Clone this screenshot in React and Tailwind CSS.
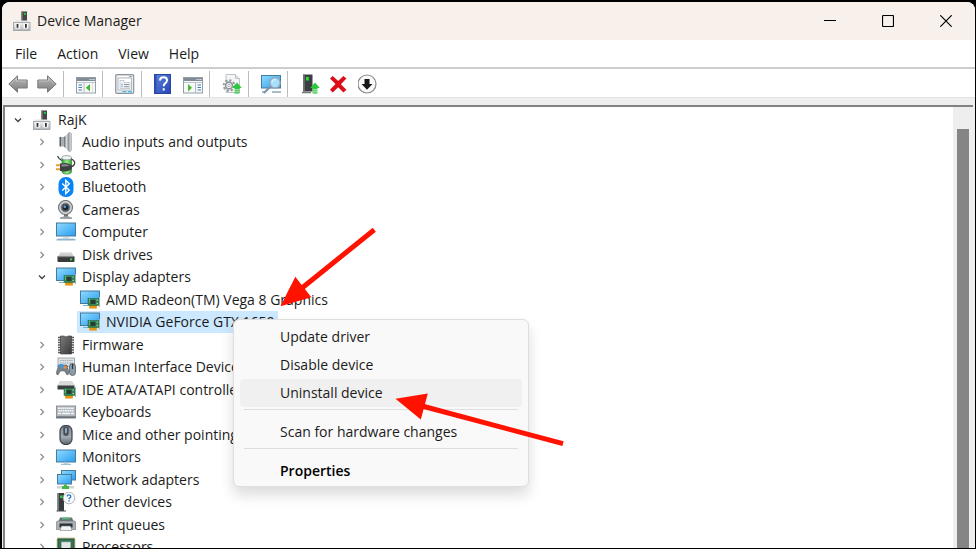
import React, { useState } from "react";

function Svg({ children, className = "size-5" }) {
  return (
    <svg viewBox="0 0 20 20" className={className + " shrink-0"} aria-hidden="true">
      {children}
    </svg>
  );
}

// gradients shared by all of the device icons
function Gradients() {
  return (
    <svg className="absolute size-0" aria-hidden="true">
      <defs>
        <linearGradient id="screen" x1="0" y1="0" x2="1" y2="1">
          <stop offset="0" stopColor="#8fdcff" />
          <stop offset="1" stopColor="#2b9cf0" />
        </linearGradient>
        <linearGradient id="metal" x1="0" y1="0" x2="0" y2="1">
          <stop offset="0" stopColor="#f1f2f3" />
          <stop offset="1" stopColor="#b4b7ba" />
        </linearGradient>
        <linearGradient id="metalSide" x1="0" y1="0" x2="1" y2="0">
          <stop offset="0" stopColor="#62676c" />
          <stop offset="0.5" stopColor="#d6dade" />
          <stop offset="1" stopColor="#83888d" />
        </linearGradient>
        <linearGradient id="mouseBody" x1="0" y1="0" x2="0" y2="1">
          <stop offset="0" stopColor="#7d868f" />
          <stop offset="0.6" stopColor="#a3abb3" />
          <stop offset="1" stopColor="#5b636b" />
        </linearGradient>
        <linearGradient id="arrowGray" x1="0" y1="0" x2="0" y2="1">
          <stop offset="0" stopColor="#b9b9b9" />
          <stop offset="1" stopColor="#7c7c7c" />
        </linearGradient>
        <linearGradient id="dark" x1="0" y1="0" x2="1" y2="1">
          <stop offset="0" stopColor="#7b7b7b" />
          <stop offset="1" stopColor="#3a3a3a" />
        </linearGradient>
        <linearGradient id="helpBlue" x1="0" y1="0" x2="1" y2="1">
          <stop offset="0" stopColor="#5f86dd" />
          <stop offset="1" stopColor="#2444b4" />
        </linearGradient>
        <linearGradient id="green" x1="0" y1="0" x2="1" y2="0">
          <stop offset="0" stopColor="#2fa32f" />
          <stop offset="0.5" stopColor="#9bee8e" />
          <stop offset="1" stopColor="#34a834" />
        </linearGradient>
      </defs>
    </svg>
  );
}

function ComputerRootIcon() {
  return (
    <Svg>
      <path d="M9.500 0.500H15v10H9.500z" fill="#454545" />
      <path d="M9.500 0.500h1.500v10H9.500z" fill="#6a6a6a" />
      <rect x="12" y="2" width="2" height="2" fill="#19c83c" />
      <path d="M3 9.500h13.500l1.500 2.500H1.500z" fill="#e4e6e8" />
      <rect x="1.500" y="11.500" width="16.500" height="8" fill="url(#metal)" stroke="#9a9da1" strokeWidth="0.800" />
      <rect x="3.500" y="12.500" width="4.500" height="5" fill="#fafafa" />
      <rect x="11.500" y="12.500" width="4.500" height="5" fill="#fafafa" />
      <rect x="4.600" y="13" width="1.800" height="3.800" fill="#333" />
      <rect x="13" y="13" width="1.800" height="3.800" fill="#333" />
    </Svg>
  );
}

function AudioIcon() {
  return (
    <Svg>
      <path d="M3.500 5h1.500v9.500H3.500z" fill="#565b60" />
      <path d="M5 5h3v9.500H5z" fill="#a9afb4" />
      <path d="M8 5 13 0.500v19l-5-5z" fill="url(#metalSide)" />
      <path d="M13 0.300q2.500 0 2.500 2v15.400q0 2-2.500 2z" fill="#c3c8cc" stroke="#959ba0" strokeWidth="0.500" />
    </Svg>
  );
}

function BatteryIcon() {
  return (
    <Svg>
      <path d="M6 3h9.500v13.500q0 2.500-4.700 2.500T6 16.500z" fill="url(#green)" stroke="#2b7e28" strokeWidth="0.700" />
      <ellipse cx="10.700" cy="2.700" rx="4.800" ry="2.100" fill="#f1f4f6" stroke="#8d9398" strokeWidth="0.800" />
      <path d="M1.500 1Q3 4.500 6 5.500M15.500 4q4 2 3 5t-4.500 2.500" fill="none" stroke="#3c3c3c" strokeWidth="1.200" />
      <path d="M0 10.300h5M0 14.300h5" stroke="#e2a42c" strokeWidth="2" />
      <path d="M4 8.500l6-.5q6 1 6 4.200T10 16.500L4 16z" fill="#3e4144" />
      <path d="M5.500 9.500l4.500-.3q3 .5 3.500 1.800l-8 .5z" fill="#8b8f92" />
    </Svg>
  );
}

function BluetoothIcon() {
  return (
    <Svg>
      <rect x="2.500" y="0" width="15" height="20" rx="7" fill="#0a84f5" />
      <path d="M6.300 6.500l7 6.800-3.500 3.400V3.300l3.500 3.400-7 6.800" fill="none" stroke="#fff" strokeWidth="1.400" />
    </Svg>
  );
}

function CameraIcon() {
  return (
    <Svg>
      <path d="M8 14h4v3H8z" fill="#6f7377" />
      <path d="M4 17.500q6-2.500 12 0v1.500H4z" fill="#9fa3a7" />
      <circle cx="9.500" cy="7.500" r="7" fill="#d4d7da" stroke="#73777b" strokeWidth="1.200" />
      <circle cx="9.500" cy="7.500" r="4.500" fill="#4f5458" stroke="#8c9094" strokeWidth="0.800" />
      <circle cx="9.500" cy="7.500" r="2.600" fill="#172636" />
      <circle cx="8.800" cy="6.700" r="1.300" fill="#69a3d2" />
    </Svg>
  );
}

function PcIcon() {
  return (
    <Svg>
      <rect x="0.500" y="1" width="19" height="13" fill="url(#screen)" stroke="#467b9c" />
      <path d="M7 15h6v2H7z" fill="#d5dde2" />
      <path d="M0.500 17h19v1.500H0.500z" fill="#8eb4ca" />
      <path d="M2 16.500h16" stroke="#c8d8e2" strokeWidth="0.800" />
    </Svg>
  );
}

function DiskIcon() {
  return (
    <Svg>
      <path d="M5 7h10l3.500 5h-17z" fill="#c9cbcd" />
      <path d="M5 7h10l1 1.500H4z" fill="#e2e3e4" />
      <rect x="1.500" y="11.500" width="17" height="5.500" rx="0.800" fill="#37393b" />
      <rect x="1.500" y="11" width="17" height="1.200" fill="#85888b" />
      <rect x="14" y="13.500" width="2.200" height="1.800" fill="#3be04c" />
    </Svg>
  );
}

function CardChip() {
  return (
    <>
      <rect x="9" y="14.500" width="8" height="4" fill="#f0a21d" />
      <path d="M11 15v3.500M13 15v3.500M15 15v3.500" stroke="#c97b0c" strokeWidth="0.600" />
      <rect x="8" y="8.500" width="11" height="7" fill="#2f8a55" stroke="#236340" strokeWidth="0.500" />
      <rect x="10.500" y="10" width="5" height="4" fill="#2b3c35" />
      <path d="M9 9.800h1M9 12h1M16.500 10h1.500M16.500 13.500h1.500" stroke="#a6dfae" strokeWidth="0.900" />
      <path d="M19.500 7v10" stroke="#a7acb0" />
    </>
  );
}

function DisplayIcon() {
  return (
    <Svg>
      <rect x="0.500" y="1" width="19" height="12.500" fill="url(#screen)" stroke="#467b9c" />
      <path d="M3 15.500h5" stroke="#7cb2d4" />
      <CardChip />
    </Svg>
  );
}

function FirmwareIcon() {
  return (
    <Svg>
      <path
        d="M2 2.500h16M2 5h16M2 7.500h16M2 10h16M2 12.500h16M2 15h16M2 17.500h16"
        stroke="#55585b"
        strokeWidth="1.300"
      />
      <path d="M4.500 1H8q2 2 4 0h3.500v18h-11z" fill="url(#dark)" stroke="#3a3a3a" strokeWidth="0.600" />
    </Svg>
  );
}

function HidIcon() {
  return (
    <Svg>
      <rect x="2" y="1" width="16.500" height="8.500" fill="#dfe2e5" stroke="#a3a9ae" />
      <path d="M4 3.500h12.500M4 6h12.500" stroke="#a0a8af" strokeDasharray="1.500 0.800" />
      <path d="M2.500 8h8.500l2 7q0 3-2 3L8.500 14h-4L2 18q-2 0-1.500-3z" fill="#7a828b" stroke="#545b62" strokeWidth="0.500" />
      <rect x="3.500" y="7" width="3.500" height="3.500" fill="#2f9df0" />
      <circle cx="9" cy="10.300" r="1.400" fill="#f28b35" />
      <rect x="13.500" y="6.500" width="6" height="12" rx="3" fill="#8e9aa4" stroke="#47515a" strokeWidth="0.700" />
      <path d="M16.500 7v5" stroke="#263543" strokeWidth="1.200" />
    </Svg>
  );
}

function IdeIcon() {
  return (
    <Svg>
      <path d="M4 1h12l3 5H1z" fill="#d8dadb" />
      <rect x="1.500" y="5.500" width="17" height="4" fill="#3c3f42" />
      <CardChip />
    </Svg>
  );
}

function KeyboardIcon() {
  return (
    <Svg>
      <rect x="0.500" y="4" width="19" height="12" fill="#b4bac0" stroke="#8d949a" />
      <path d="M0.500 15.200h19" stroke="#6a7178" strokeWidth="1.800" />
      <path d="M2 6.300h16M2.500 8.800h15" stroke="#f7f9fa" strokeWidth="1.600" strokeDasharray="1.700 0.500" />
      <path d="M2 11.500h3M6 11.500h8M15 11.500h3" stroke="#f7f9fa" strokeWidth="1.600" />
    </Svg>
  );
}

function MouseIcon() {
  return (
    <Svg>
      <rect x="4" y="0.500" width="12" height="19" rx="5.500" fill="url(#mouseBody)" stroke="#3c4249" strokeWidth="1.200" />
      <path d="M7.300 1.500v7.500q0 2 2.700 2t2.700-2V1.500z" fill="#4c545c" />
      <rect x="8.800" y="2.500" width="2.400" height="6" rx="1" fill="#a8c4dc" stroke="#20272d" strokeWidth="0.600" />
    </Svg>
  );
}

function MonitorIcon() {
  return (
    <Svg>
      <rect x="0.500" y="3" width="19" height="12" fill="url(#screen)" stroke="#467b9c" />
      <path d="M8 15.500h4v1.300H8z" fill="#b8cad6" />
      <path d="M5 17.300h10" stroke="#8bb0c6" />
    </Svg>
  );
}

function NetworkIcon() {
  return (
    <Svg>
      <rect x="5.500" y="0.500" width="14" height="9.500" fill="url(#screen)" stroke="#467b9c" />
      <rect x="1.500" y="4.500" width="14" height="9.500" fill="url(#screen)" stroke="#467b9c" />
      <path d="M1 17.300h17" stroke="#d0d4d6" strokeWidth="2.500" />
      <path d="M8 14.500h3v1.500h2v3H6v-3h2z" fill="#43b74b" />
    </Svg>
  );
}

function OtherIcon() {
  return (
    <Svg>
      <path d="M1.500 1H8v18H1.500z" fill="#383b3e" />
      <path d="M1.500 1H3v18H1.500z" fill="#75797c" />
      <rect x="4" y="3.500" width="2.500" height="2.500" fill="#27dd3d" />
      <path d="M0.500 19h9.500" stroke="#4c4f52" />
      <circle cx="13" cy="6" r="5.800" fill="#f8fafb" stroke="#a9b0b6" strokeWidth="0.900" />
      <path d="M11.200 4.500q0-1.600 1.800-1.600t1.800 1.500q0 1-1 1.500-.8.500-.8 1.400M13 8.300v1.200" fill="none" stroke="#2676c5" strokeWidth="1.300" />
    </Svg>
  );
}

function PrinterIcon() {
  return (
    <Svg>
      <path d="M4 2.500h12l1.500 4h-15z" fill="#6b7176" />
      <path d="M6 2.500h8v1.800H6z" fill="#50bd7a" />
      <path d="M1 6h18l1 3v5.500H0V9z" fill="#a9b0b6" stroke="#737a80" strokeWidth="0.600" />
      <path d="M3.500 8.500h13v4h-13z" fill="#2d3135" />
      <path d="M5.500 11h9l1.500 4.500H4z" fill="#f1f3f5" stroke="#7a8085" strokeWidth="0.600" />
    </Svg>
  );
}

function ProcessorIcon() {
  return (
    <Svg>
      <rect x="1.500" y="1.500" width="17" height="17" fill="none" stroke="#b3913e" strokeWidth="2" strokeDasharray="1 1" />
      <rect x="2" y="2" width="16" height="16" fill="#347454" stroke="#24543c" />
      <rect x="5.500" y="5" width="9" height="10" fill="#e3e6e5" stroke="#a9afac" strokeWidth="0.700" />
    </Svg>
  );
}

function BackIcon() {
  return (
    <Svg>
      <path d="M0.800 10 9.500 1.800V6H19.200v8H9.500v4.200z" fill="url(#arrowGray)" stroke="#7a7a7a" strokeLinejoin="round" />
      <path d="M2.600 10 8.500 4.300V7h9.700" fill="none" stroke="#d0d0d0" strokeWidth="0.700" />
    </Svg>
  );
}

function ForwardIcon() {
  return (
    <Svg>
      <path d="M19.200 10 10.500 1.800V6H0.800v8h9.700v4.200z" fill="url(#arrowGray)" stroke="#7a7a7a" strokeLinejoin="round" />
      <path d="M1.800 7h9.700V4.300l5.900 5.700" fill="none" stroke="#d0d0d0" strokeWidth="0.700" />
    </Svg>
  );
}

function TreePaneIcon() {
  return (
    <Svg>
      <rect x="0.500" y="3.500" width="19" height="15.500" fill="#f8f9fa" stroke="#989da3" />
      <rect x="1" y="4" width="18" height="3" fill="#7f8c98" />
      <path d="M13.500 5.500h1M15.500 5.500h1M17.300 5.500h1" stroke="#fff" />
      <path d="M1 8.500h18" stroke="#bfc5cb" />
      <path d="M2.500 11h3.500M2.500 13.500h3.500M2.500 16h3.500" stroke="#3e80b8" strokeWidth="1.200" />
      <path d="M8 9v10" stroke="#b3b9bf" />
      <path d="M14 10v7.500L9.800 13.700z" fill="#47b629" />
      <path d="M16.500 9v10" stroke="#d9dde0" />
    </Svg>
  );
}

function ActionPaneIcon() {
  return (
    <Svg>
      <rect x="0.500" y="3.500" width="19" height="15.500" fill="#f8f9fa" stroke="#989da3" />
      <rect x="1" y="4" width="18" height="3" fill="#7f8c98" />
      <path d="M13.500 5.500h1M15.500 5.500h1M17.300 5.500h1" stroke="#fff" />
      <path d="M1 8.500h18" stroke="#bfc5cb" />
      <path d="M5 10v7.500l4-3.800z" fill="#47b629" />
      <path d="M12.500 9v10" stroke="#b3b9bf" />
      <path d="M14.500 11H18M14.500 13.500H18M14.500 16H18" stroke="#3e80b8" strokeWidth="1.200" />
    </Svg>
  );
}

function PropertiesIcon() {
  return (
    <Svg>
      <rect x="0.700" y="0.700" width="18" height="18.600" rx="1" fill="#e9ebed" stroke="#8f959a" strokeWidth="1.200" />
      <rect x="3" y="4" width="13.500" height="12" fill="#fff" stroke="#a7adb3" strokeWidth="0.800" />
      <path d="M3 2.500h10" stroke="#fff" />
      <path d="M14.500 2.500h2" stroke="#7f858a" />
      <path d="M5 6.500h4v2h6v6H5z" fill="#f3f6f8" stroke="#b4bac0" strokeWidth="0.700" />
      <path d="M6.500 10.500h1M6.500 12.700h1" stroke="#2f96d6" strokeWidth="1.300" />
      <path d="M9 10.500h5M9 12.700h5" stroke="#8b9197" />
      <path d="M7.500 17.600h4M13 17.600h4" stroke="#38bce8" strokeWidth="1.400" />
    </Svg>
  );
}

function HelpIcon() {
  return (
    <Svg>
      <rect x="0.500" y="0.500" width="16" height="19" fill="url(#helpBlue)" stroke="#2743a0" />
      <path d="M0.500 0.500h2v19h-2z" fill="#2c4fb5" />
      <path
        d="M6 6.500q0-3.300 3.500-3.300T13 6.300q0 1.800-1.800 3-1.500 1-1.500 3M9.700 14.300v2.300"
        fill="none"
        stroke="#fff"
        strokeWidth="2"
      />
    </Svg>
  );
}

function UpArrow() {
  return <path d="M15 8.500l4.800 5.500h-2.300v1.500h-5V14h-2.300zM12.500 16.300h5v1.200h-5zM12.500 18.300h5v1.200h-5z" fill="#2ac83a" />;
}

function UpdateIcon() {
  return (
    <Svg>
      <path d="M4 0.500h9.500l4 4v14H4z" fill="#f4f5f6" stroke="#c0c4c7" />
      <path d="M13.500 0.500v4h4" fill="#e0e3e5" stroke="#c0c4c7" />
      <circle cx="7" cy="11.500" r="5.300" fill="none" stroke="#959a9e" strokeWidth="2" strokeDasharray="2.200 1.900" />
      <circle cx="7" cy="11.500" r="3.400" fill="#eceeef" stroke="#94999d" strokeWidth="1.600" />
      <circle cx="7" cy="11.500" r="1.200" fill="#fff" stroke="#8b8f93" strokeWidth="0.600" />
      <UpArrow />
    </Svg>
  );
}

function ScanIcon() {
  return (
    <Svg>
      <rect x="0.500" y="1.500" width="19" height="12.500" fill="url(#screen)" stroke="#467b9c" />
      <path d="M1 18h4M11 18h9" stroke="#88a5b7" strokeWidth="1.500" />
      <path d="M10 12 3 19" stroke="#7995aa" strokeWidth="2.200" />
      <circle cx="14" cy="8.800" r="5.200" fill="#a8e0fc" stroke="#91a5b5" strokeWidth="1.400" />
      <path d="M10.800 8.500q.5-3 3.500-3" fill="none" stroke="#eafaff" />
    </Svg>
  );
}

function AddDriverIcon() {
  return (
    <Svg>
      <path d="M3 0.500h9.500v17H3z" fill="#3c3f42" />
      <path d="M3 0.500h1.800v17H3z" fill="#707478" />
      <rect x="6" y="3" width="2.800" height="3.500" fill="#2add3f" />
      <path d="M2 18.500h9" stroke="#77797b" strokeWidth="1.500" />
      <UpArrow />
    </Svg>
  );
}

function RemoveIcon() {
  return (
    <Svg>
      <path d="M1 4.500 3.700 2l5.500 5 5.200-5 3 2.500-5.500 5.700 5.500 5.500-3 2.800-5.200-5.300-5.500 5.300L1 15.800l5.500-5.700z" fill="#dc0d16" />
    </Svg>
  );
}

function DisableIcon() {
  return (
    <Svg>
      <circle cx="9" cy="10" r="9" fill="#fafafa" stroke="#8a8a8a" strokeWidth="1.200" />
      <path d="M6.500 5h5v5h3L9 15.800 3.500 10h3z" fill="#171717" />
    </Svg>
  );
}

const menus = ["File", "Action", "View", "Help"];

const toolbarGroups = [
  [
    { label: "Back", Icon: BackIcon },
    { label: "Forward", Icon: ForwardIcon },
  ],
  [{ label: "Show/Hide Console Tree", Icon: TreePaneIcon }],
  [{ label: "Properties", Icon: PropertiesIcon }],
  [
    { label: "Help", Icon: HelpIcon },
    { label: "Show/Hide Action Pane", Icon: ActionPaneIcon },
  ],
  [{ label: "Update device driver", Icon: UpdateIcon }],
  [{ label: "Scan for hardware changes", Icon: ScanIcon }],
  [
    { label: "Add drivers", Icon: AddDriverIcon },
    { label: "Uninstall device", Icon: RemoveIcon },
    { label: "Disable device", Icon: DisableIcon },
  ],
];

const devices = [
  { name: "RajK", level: 0, open: true, Icon: ComputerRootIcon },
  { name: "Audio inputs and outputs", level: 1, Icon: AudioIcon },
  { name: "Batteries", level: 1, Icon: BatteryIcon },
  { name: "Bluetooth", level: 1, Icon: BluetoothIcon },
  { name: "Cameras", level: 1, Icon: CameraIcon },
  { name: "Computer", level: 1, Icon: PcIcon },
  { name: "Disk drives", level: 1, Icon: DiskIcon },
  { name: "Display adapters", level: 1, open: true, Icon: DisplayIcon },
  { name: "AMD Radeon(TM) Vega 8 Graphics", level: 2, Icon: DisplayIcon },
  { name: "NVIDIA GeForce GTX 1650", level: 2, Icon: DisplayIcon },
  { name: "Firmware", level: 1, Icon: FirmwareIcon },
  { name: "Human Interface Devices", level: 1, Icon: HidIcon },
  { name: "IDE ATA/ATAPI controllers", level: 1, Icon: IdeIcon },
  { name: "Keyboards", level: 1, Icon: KeyboardIcon },
  { name: "Mice and other pointing devices", level: 1, Icon: MouseIcon },
  { name: "Monitors", level: 1, Icon: MonitorIcon },
  { name: "Network adapters", level: 1, Icon: NetworkIcon },
  { name: "Other devices", level: 1, Icon: OtherIcon },
  { name: "Print queues", level: 1, Icon: PrinterIcon },
  { name: "Processors", level: 1, Icon: ProcessorIcon },
];

const indents = ["pl-[5px]", "pl-[29px]", "pl-[53px]"];

function Chevron({ open }) {
  return (
    <svg viewBox="0 0 16 16" className="size-4" fill="none" aria-hidden="true">
      {open ? (
        <path d="M5 6.500l3 3 3-3" stroke="#404040" strokeWidth="1.300" />
      ) : (
        <path d="M6.500 5l3 3-3 3" stroke="#8f8f8f" strokeWidth="1.300" />
      )}
    </svg>
  );
}

function DeviceRow({ device, selected, onSelect }) {
  const { name, level, open, Icon } = device;
  return (
    <li className={`flex items-center gap-[3px] odd:h-[23px] even:h-[22px] ${indents[level]}`}>
      {level < 2 ? (
        <button className="size-4" aria-label={"Toggle " + name}>
          <Chevron open={open} />
        </button>
      ) : (
        <span className="size-4" />
      )}
      <button
        onClick={onSelect}
        className={`flex h-full items-center gap-[6px] px-[3px] whitespace-nowrap ${
          selected ? "bg-[#cce8ff]" : ""
        }`}
      >
        <Icon />
        {name}
      </button>
    </li>
  );
}

function MenuItem({ children, className = "" }) {
  return (
    <button
      role="menuitem"
      className={`mx-[6px] flex h-7 items-center rounded-sm pl-10 text-left whitespace-nowrap ${className}`}
    >
      {children}
    </button>
  );
}

function ContextMenu() {
  return (
    <div
      role="menu"
      className="absolute top-[319px] left-[233px] flex w-[296px] flex-col rounded-md border border-[#dedede] bg-[#f9f9f9] pt-[3px] pb-px shadow-[0_8px_14px_rgba(0,0,0,0.14)]"
    >
      <MenuItem>Update driver</MenuItem>
      <MenuItem>Disable device</MenuItem>
      <MenuItem className="bg-[#f0f0f0]">Uninstall device</MenuItem>
      <hr className="mx-[10px] mt-[2px] mb-2 border-[#dedede]" />
      <MenuItem>Scan for hardware changes</MenuItem>
      <hr className="mx-[10px] mt-[2px] mb-2 border-[#dedede]" />
      <MenuItem className="font-semibold text-black">Properties</MenuItem>
    </div>
  );
}

function Arrows() {
  return (
    <svg className="pointer-events-none absolute inset-0 size-full" aria-hidden="true">
      <g fill="#ff1200" stroke="#ff1200">
        <path d="M374.300 229.700 302 288" strokeWidth="5" />
        <path d="M280.500 306.200 295.300 276.700 311.300 297.300z" stroke="none" />
        <path d="M563 443.700 422 406" strokeWidth="5" />
        <path d="M395.500 398.700 427.800 393.600 420.800 419.400z" stroke="none" />
      </g>
    </svg>
  );
}

export default function App() {
  const [selected, setSelected] = useState("NVIDIA GeForce GTX 1650");

  return (
    <div className="relative h-screen overflow-hidden bg-black pt-[2px] pr-px pb-px pl-[2px] font-['Open_Sans',sans-serif] text-sm text-[#1b1b1b]">
      <Gradients />
      <div className="flex h-full flex-col overflow-hidden rounded-t-lg bg-white">
        <header className="flex h-[38px] shrink-0 items-center bg-[#f8f1eb] pl-[10px]">
          <ComputerRootIcon />
          <h1 className="ml-[5px] flex-1">Device Manager</h1>
          <button className="flex h-full w-[58px] items-center justify-center" aria-label="Minimize">
            <svg viewBox="0 0 12 12" className="size-3" stroke="#000">
              <path d="M0 5.500h12" />
            </svg>
          </button>
          <button className="flex h-full w-[58px] items-center justify-center" aria-label="Maximize">
            <svg viewBox="0 0 12 12" className="size-3" stroke="#000" fill="none">
              <rect x="0.500" y="0.500" width="11" height="11" rx="1" strokeWidth="1.200" />
            </svg>
          </button>
          <button className="flex h-full w-[58px] items-center justify-center" aria-label="Close">
            <svg viewBox="0 0 12 12" className="size-3" stroke="#000">
              <path d="M0.300 0.300l11.400 11.400M11.700 0.300 0.300 11.700" strokeWidth="1.200" />
            </svg>
          </button>
        </header>

        <nav className="flex h-[29px] shrink-0 items-center gap-5 border-b-2 border-[#cdcdcd] pt-px pl-[13px]">
          {menus.map((menu) => (
            <button key={menu}>{menu}</button>
          ))}
        </nav>

        <div className="flex h-[29px] shrink-0 items-center border-b border-[#e2e2e2] pt-px pl-[6px]">
          {toolbarGroups.map((group, i) => (
            <React.Fragment key={i}>
              {i > 0 && <span className="mr-3 ml-[6px] h-[26px] w-px bg-[#bdbdbd]" />}
              <div className="flex gap-[9px]">
                {group.map(({ label, Icon }) => (
                  <button key={label} aria-label={label}>
                    <Icon />
                  </button>
                ))}
              </div>
            </React.Fragment>
          ))}
        </div>

        <main className="flex min-h-0 flex-1 bg-[#eee] pt-[7px] pr-[2px] pl-px">
          <div className="flex min-w-0 flex-1 overflow-hidden border-t-2 border-l-2 border-[#828282] bg-white">
            <ul className="min-w-0 flex-1 pt-px">
              {devices.map((device) => (
                <DeviceRow
                  key={device.name}
                  device={device}
                  selected={device.name === selected}
                  onSelect={() => setSelected(device.name)}
                />
              ))}
            </ul>
            <div className="flex w-5 justify-center bg-[#eee] pt-[22px]">
              <div className="w-3 bg-[#858585]" />
            </div>
          </div>
        </main>
      </div>
      <ContextMenu />
      <Arrows />
    </div>
  );
}
